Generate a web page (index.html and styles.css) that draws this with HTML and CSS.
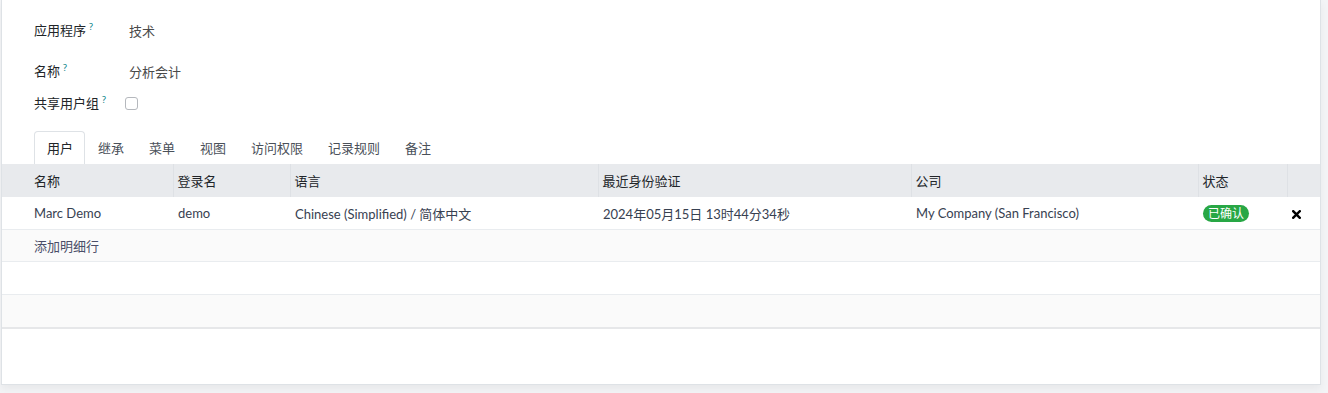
FILE: index.html
```html
<!DOCTYPE html>
<html lang="zh">
<head>
<meta charset="utf-8">
<link rel="stylesheet" href="styles.css">
</head>
<body>
<div class="sheet">
  <div class="group">
    <div class="row r1">
      <div class="label">应用程序<sup>?</sup></div>
      <div class="value">技术</div>
    </div>
    <div class="row r2">
      <div class="label">名称<sup>?</sup></div>
      <div class="value">分析会计</div>
    </div>
    <div class="row r3">
      <div class="label">共享用户组<sup>?</sup></div>
      <div class="value"><span class="checkbox"></span></div>
    </div>
  </div>
  <ul class="tabs">
    <li class="tab active">用户</li>
    <li class="tab">继承</li>
    <li class="tab">菜单</li>
    <li class="tab">视图</li>
    <li class="tab">访问权限</li>
    <li class="tab">记录规则</li>
    <li class="tab">备注</li>
  </ul>
  <table class="list">
    <colgroup>
      <col style="width:171px"><col style="width:117px"><col style="width:308px"><col style="width:313px"><col style="width:287px"><col style="width:89px"><col style="width:33px">
    </colgroup>
    <thead>
      <tr>
        <th class="first">名称</th>
        <th>登录名</th>
        <th>语言</th>
        <th>最近身份验证</th>
        <th>公司</th>
        <th>状态</th>
        <th></th>
      </tr>
    </thead>
    <tbody>
      <tr class="data">
        <td class="first">Marc Demo</td>
        <td>demo</td>
        <td>Chinese (Simplified) / 简体中文</td>
        <td>2024年05月15日 13时44分34秒</td>
        <td>My Company (San Francisco)</td>
        <td><span class="badge">已确认</span></td>
        <td class="del"><svg width="9" height="9" viewBox="0 0 9 9"><path d="M1.2 1.2 L7.8 7.8 M7.8 1.2 L1.2 7.8" stroke="#000" stroke-width="2.4" stroke-linecap="square"/></svg></td>
      </tr>
      <tr class="add stripe">
        <td class="first" colspan="7"><a class="addline">添加明细行</a></td>
      </tr>
      <tr class="empty"><td colspan="7"></td></tr>
      <tr class="empty stripe"><td colspan="7"></td></tr>
    </tbody>
    <tfoot>
      <tr><td colspan="7"></td></tr>
    </tfoot>
  </table>
  <div class="bottom-space"></div>
</div>
</body>
</html>
```

FILE: styles.css
```css
html, body {
  margin: 0;
  padding: 0;
}
body {
  background: #f3f4f6;
  font-family: "Noto Sans", "Noto Sans CJK SC", sans-serif;
  font-size: 13px;
  color: #212529;
  height: 393px;
  overflow: hidden;
}
.sheet {
  width: 1318px;
  margin-left: 1px;
  background: #fff;
  border: 1px solid #dee2e6;
  border-top: none;
  box-shadow: 0 4px 8px rgba(0, 0, 0, 0.05);
}
.group {
  padding: 14px 32px 12px 32px;
}
.row {
  display: flex;
  align-items: center;
  height: 32px;
}
.r2 {
  margin-top: 9px;
}
.label {
  width: 95px;
  color: #212529;
  line-height: 18px;
}
.label sup {
  color: #017e84;
  font-size: 9px;
  margin-left: 3px;
  vertical-align: top;
  position: relative;
  top: -3px;
}
.value {
  color: #4a4a4a;
}
.checkbox {
  display: block;
  width: 11px;
  height: 11px;
  border: 1px solid #b5b8bd;
  border-radius: 3px;
  margin-left: -4px;
}
.tabs {
  list-style: none;
  margin: 0;
  padding: 0 32px;
  display: flex;
  height: 33px;
}
.tab {
  border: 1px solid transparent;
  border-bottom: none;
  border-radius: 4px 4px 0 0;
  padding: 0 11px 0 12px;
  line-height: 32px;
  color: #4a5059;
}
.tab.active {
  border-color: #dee2e6;
  color: #212529;
  background: #fff;
}
.list {
  width: 1318px;
  border-collapse: collapse;
  table-layout: fixed;
}
.list th {
  background: #e8eaed;
  font-weight: normal;
  text-align: left;
  height: 33px;
  padding: 0 4px;
  border-left: 1px solid #dee1e5;
  color: #212529;
}
.list th.first {
  border-left: none;
  padding-left: 32px;
}
.list td {
  height: 31px;
  padding: 0 4px 0 5px;
  border-top: 1px solid #e9ecef;
  color: #374151;
  white-space: nowrap;
  font-family: "Lato", "Noto Sans CJK SC", sans-serif;
}
.list td.first {
  padding-left: 32px;
}
.list tr.data td {
  border-top: none;
  height: 32px;
}
.stripe td {
  background: #fafafa;
}
.addline {
  color: #4b4e68;
}
.badge {
  display: inline-block;
  background: #28a745;
  color: #fff;
  font-size: 12px;
  line-height: 17px;
  padding: 0 5px;
  border-radius: 9px;
}
.del svg {
  display: inline-block;
  vertical-align: middle;
}
.list tbody tr.empty td {
  height: 32px;
}
.list tfoot td {
  border-top: 2px solid #e6e7e9;
  height: 0;
  padding: 0;
}
.bottom-space {
  height: 55px;
}
```
